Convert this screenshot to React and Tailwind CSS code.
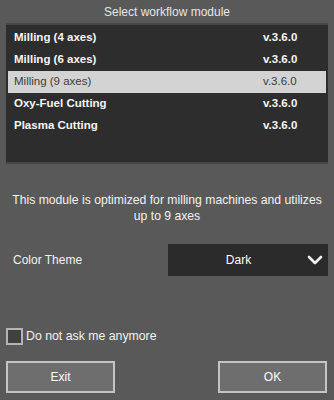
import { useState } from 'react';

const MODULES = [
  { name: 'Milling (4 axes)', version: 'v.3.6.0' },
  { name: 'Milling (6 axes)', version: 'v.3.6.0' },
  { name: 'Milling (9 axes)', version: 'v.3.6.0' },
  { name: 'Oxy-Fuel Cutting', version: 'v.3.6.0' },
  { name: 'Plasma Cutting', version: 'v.3.6.0' },
];

export default function App() {
  const [selected, setSelected] = useState(2);
  const [dontAsk, setDontAsk] = useState(false);

  return (
    <div className="w-[334px] h-[400px] bg-[#595959] text-[11px] text-[#f2f2f2] font-['Liberation_Sans',Arial,sans-serif] select-none">
      {/* Title */}
      <div className="h-[23px] flex items-center justify-center text-[12px] text-[#e6e6e6]">
        Select workflow module
      </div>

      {/* Module list */}
      <div className="mx-[6px] h-[141px] bg-[#2d2d2d] border-t-2 border-b-2 border-[#474747] px-[2px] pt-[2px]">
        {MODULES.map((m, i) => (
          <div
            key={m.name}
            onClick={() => setSelected(i)}
            className={`h-[22px] flex items-center pl-[6px] text-[11.5px] cursor-default ${
              selected === i ? 'bg-[#d3d3d3] text-[#3c3c3c]' : 'text-[#f6f6f6] font-bold'
            }`}
          >
            <span className="flex-1">{m.name}</span>
            <span className="w-[63px]">{m.version}</span>
          </div>
        ))}
      </div>

      {/* Description */}
      <p className="mt-[28px] px-[6px] text-center leading-[16px] text-[12.2px]">
        This module is optimized for milling machines and utilizes up to 9 axes
      </p>

      {/* Color theme */}
      <div className="mt-[20px] flex items-center pl-[13px] pr-[6px]">
        <span className="flex-1 text-[12px]">Color Theme</span>
        <button className="w-[160px] h-[32px] bg-[#2b2b2b] flex items-center text-[12px] text-white">
          <span className="flex-1 text-center pl-[2px]">Dark</span>
          <svg width="16" height="10" viewBox="0 0 16 10" className="mr-[5px]">
            <polyline points="2,2 8,8 14,2" fill="none" stroke="#f2f2f2" strokeWidth="2.6" strokeLinecap="round" strokeLinejoin="round" />
          </svg>
        </button>
      </div>

      {/* Checkbox */}
      <label className="mt-[51px] ml-[6px] flex items-center gap-[3px] text-[12.3px] w-fit cursor-default">
        <span
          onClick={() => setDontAsk(!dontAsk)}
          className="w-[17px] h-[17px] border-2 border-[#b4b4b4] bg-[#404040] flex items-center justify-center text-white text-[11px]"
        >
          {dontAsk ? '✓' : ''}
        </span>
        Do not ask me anymore
      </label>

      {/* Buttons */}
      <div className="mt-[16px] flex justify-between px-[6px] pr-[7px]">
        <button className="w-[109px] h-[32px] border-2 border-[#c4c4c4] bg-[#6e6e6e] text-white text-[12px]">Exit</button>
        <button className="w-[109px] h-[32px] border-2 border-[#c4c4c4] bg-[#6e6e6e] text-white text-[12px]">OK</button>
      </div>
    </div>
  );
}
